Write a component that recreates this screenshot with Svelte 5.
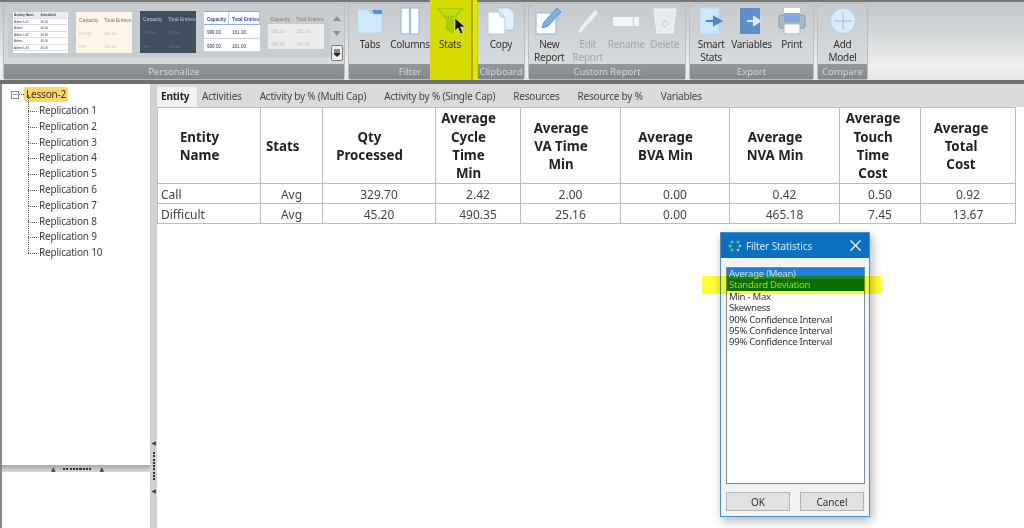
<script>
  const headers = [
    { w: 103, lines: ['Entity', 'Name'] },
    { w: 62, lines: ['Stats'] },
    { w: 113, lines: ['Qty', 'Processed'] },
    { w: 85, lines: ['Average', 'Cycle', 'Time', 'Min'] },
    { w: 100, lines: ['Average', 'VA Time', 'Min'] },
    { w: 109, lines: ['Average', 'BVA Min'] },
    { w: 110, lines: ['Average', 'NVA Min'] },
    { w: 81, lines: ['Average', 'Touch', 'Time', 'Cost'] },
    { w: 95, lines: ['Average', 'Total', 'Cost'] }
  ];
  const rows = [
    ['Call', 'Avg', '329.70', '2.42', '2.00', '0.00', '0.42', '0.50', '0.92'],
    ['Difficult', 'Avg', '45.20', '490.35', '25.16', '0.00', '465.18', '7.45', '13.67']
  ];
  const tabs = ['Activities', 'Activity by % (Multi Cap)', 'Activity by % (Single Cap)', 'Resources', 'Resource by %', 'Variables'];
  const reps = Array.from({ length: 10 }, (_, i) => `Replication ${i + 1}`);
  const stats = ['Average (Mean)', 'Standard Deviation', 'Min - Max', 'Skewness', '90% Confidence Interval', '95% Confidence Interval', '99% Confidence Interval'];
</script>

<div class="page">
  <header class="ribbon">
    <section class="group personalize">
      <div class="body gallery">
        <div class="thumbs">
          <div class="thumb t1">
            <div class="mini-head"><span>Activity Name</span><span>Scheduled</span></div>
            {#each ['Admin Lvl1', 'Admin', 'Admin Lvl2', 'Admin', 'Admin Lvl3'] as n}
              <div class="mini-row"><span>{n}</span><span>40.00</span></div>
            {/each}
          </div>
          <div class="thumb t2"><b>Capacity</b><b>Total Entries</b><i>999.00</i><i>161.00</i><i>999</i><i>161.00</i></div>
          <div class="thumb t3"><b>Capacity</b><b>Total Entries</b><i>999.00</i><i>161.00</i><i>999</i><i>161.00</i></div>
          <div class="thumb t4"><b>Capacity</b><b>Total Entries</b><i>999.00</i><i>161.00</i><i>999.00</i><i>161.00</i></div>
          <div class="thumb t5"><b>Capacity</b><b>Total Entries</b><i>999.00</i><i>161.00</i><i>999.00</i><i>161.00</i></div>
        </div>
        <div class="scroller">
          <svg class="arr" width="8" height="5" viewBox="0 0 8 5"><path d="M4 0l4 5H0z" fill="#8b9093"/></svg>
          <svg class="arr" width="8" height="5" viewBox="0 0 8 5"><path d="M4 5l4-5H0z" fill="#8b9093"/></svg>
          <span class="more"><svg width="8" height="8" viewBox="0 0 8 8"><path d="M1 1h6M1 3h6M1 4.500h6L4 7.500z" stroke="#222" fill="#222" stroke-width="1"/></svg></span>
        </div>
      </div>
      <div class="label">Personalize</div>
    </section>

    <section class="group filter">
      <div class="body tools">
        <div class="tool">
          <svg width="26" height="28" viewBox="0 0 26 28"><path d="M1 3h10l3 4h11v19H1z" fill="#cfe9fb" stroke="#b6daf2"/><path d="M15 3h10v4H17z" fill="#4e94d8"/></svg>
          <span>Tabs</span>
        </div>
        <div class="tool">
          <svg width="20" height="28" viewBox="0 0 20 28"><rect x="1" y="1" width="8.500" height="26" fill="#fff" stroke="#9cc2e6" stroke-width="1.300"/><rect x="10.500" y="1" width="8.500" height="26" fill="#fff" stroke="#9cc2e6" stroke-width="1.300"/></svg>
          <span>Columns</span>
        </div>
        <div class="tool hi">
          <svg width="28" height="28" viewBox="0 0 28 28"><path d="M0 1h28L18 13v14l-8-4V13z" fill="#a8cc00"/><path d="M3 2h22l-7 7H10z" fill="#bede10"/></svg>
          <span>Stats</span>
        </div>
      </div>
      <div class="label">Filter</div>
    </section>

    <section class="group clip">
      <div class="body tools">
        <div class="tool">
          <svg width="28" height="28" viewBox="0 0 28 28"><path d="M11 1h11l5 5v17H11z" fill="#e4f0fa" stroke="#a8cbe9"/><path d="M1 5h12l5 5v17H1z" fill="#fff" stroke="#a8cbe9"/><path d="M13 5v5h5" fill="#d5e8f7" stroke="#a8cbe9"/></svg>
          <span>Copy</span>
        </div>
      </div>
      <div class="label">Clipboard</div>
    </section>

    <section class="group custom">
      <div class="body tools">
        <div class="tool">
          <svg width="28" height="28" viewBox="0 0 28 28"><rect x="1" y="6" width="20" height="21" fill="#fff" stroke="#9cc2e6" stroke-width="1.300"/><path d="M7 21l2-6L22 1l4 4-13 14z" fill="#7fb0e2" stroke="#5c92cf"/></svg>
          <span>New<br />Report</span>
        </div>
        <div class="tool off">
          <svg width="22" height="28" viewBox="0 0 22 28"><path d="M1 27l2-6L18 3l3 3L5 24z" fill="#eef1f3"/></svg>
          <span>Edit<br />Report</span>
        </div>
        <div class="tool off">
          <svg width="26" height="28" viewBox="0 0 26 28"><rect x="0" y="10" width="20" height="9" fill="#f2f4f5"/><rect x="21" y="10" width="5" height="9" fill="#f2f4f5"/></svg>
          <span>Rename</span>
        </div>
        <div class="tool off">
          <svg width="24" height="28" viewBox="0 0 24 28"><path d="M1 2h22l-3 24H4z" fill="#e8ebed" stroke="#f4f5f6"/><path d="M9 17l3-4 3 4-3 3z" fill="none" stroke="#c5cacd"/></svg>
          <span>Delete</span>
        </div>
      </div>
      <div class="label">Custom Report</div>
    </section>

    <section class="group export">
      <div class="body tools">
        <div class="tool">
          <svg width="24" height="28" viewBox="0 0 24 28"><rect x="1" y="1" width="19" height="26" fill="#cfe6f9" stroke="#b4d5ee"/><path d="M7 14h10M15 10l7 4-7 4z" stroke="#4a86c2" stroke-width="2" fill="#4a86c2"/></svg>
          <span>Smart<br />Stats</span>
        </div>
        <div class="tool">
          <svg width="24" height="28" viewBox="0 0 24 28"><rect x="1" y="1" width="20" height="26" fill="#5f8ec6"/><path d="M8 14h9M15 10l6 4-6 4z" stroke="#dcecf9" stroke-width="2" fill="#dcecf9"/></svg>
          <span>Variables</span>
        </div>
        <div class="tool">
          <svg width="28" height="28" viewBox="0 0 28 28"><rect x="6" y="1" width="16" height="8" fill="#fff"/><rect x="1" y="8" width="26" height="13" rx="2" fill="#aab6c2" stroke="#8d99a6"/><rect x="6" y="6" width="16" height="9" fill="#7fa9e0"/><rect x="6" y="17" width="16" height="10" fill="#f7f8f9" stroke="#aab6c2"/></svg>
          <span>Print</span>
        </div>
      </div>
      <div class="label">Export</div>
    </section>

    <section class="group compare">
      <div class="body tools">
        <div class="tool">
          <svg width="28" height="28" viewBox="0 0 28 28"><circle cx="14" cy="14" r="12.500" fill="#dcedfa" stroke="#b5d6f0" stroke-width="1.500"/><path d="M14 5v18M5 14h18" stroke="#a6cdee" stroke-width="1.300"/></svg>
          <span>Add<br />Model</span>
        </div>
      </div>
      <div class="label">Compare</div>
    </section>
  </header>

  <main class="main">
    <aside class="side">
      <div class="tree">
        <div class="root">
          <span class="minus"></span><span class="dots"></span><span class="lesson">Lesson-2</span>
        </div>
        <ul>
          {#each reps as r}
            <li>{r}</li>
          {/each}
        </ul>
      </div>
      <div class="hsplit">
        <span class="tri">▲</span><span class="grip"></span><span class="tri">▲</span>
      </div>
      <div class="lower"></div>
    </aside>

    <div class="vsplit">
      <span class="tri">◀</span><span class="grip"></span><span class="tri">◀</span>
    </div>

    <section class="content">
      <nav class="tabs">
        <span class="tab on">Entity</span>
        {#each tabs as t}
          <span class="tab">{t}</span>
        {/each}
      </nav>
      <table>
        <colgroup>
          {#each headers as h}
            <col style:width="{h.w}px" />
          {/each}
        </colgroup>
        <thead>
          <tr>
            {#each headers as h, i}
              <th class:lefty={i === 1} class:tight={i > 6}>
                {#each h.lines as l}{l}<br />{/each}
              </th>
            {/each}
          </tr>
        </thead>
        <tbody>
          {#each rows as row}
            <tr>
              {#each row as c, i}
                <td class:first={i === 0}>{c}</td>
              {/each}
            </tr>
          {/each}
        </tbody>
      </table>
    </section>
  </main>

  <div class="hl hl-stats"></div>

  <svg class="cursor" width="12" height="18" viewBox="0 0 12 18"><path d="M1 1v13l3-3 2.500 6 2.500-1-2.500-6H11z" fill="#111" stroke="#eee" stroke-width=".6"/></svg>

  <div class="dialog">
    <div class="title">
      <svg width="14" height="14" viewBox="0 0 14 14"><g fill="#6fbf73"><circle cx="4" cy="3" r="1.500"/><circle cx="10" cy="3" r="1.500"/><circle cx="2" cy="7" r="1.500"/><circle cx="4" cy="11" r="1.500"/></g><g fill="#9ad0e8"><circle cx="12" cy="7" r="1.300"/><circle cx="10" cy="11" r="1.300"/></g></svg>
      <span class="ttext">Filter Statistics</span>
      <svg class="x" width="11" height="11" viewBox="0 0 11 11"><path d="M.5.5l10 10M10.500.5l-10 10" stroke="#fff" stroke-width="1.200"/></svg>
    </div>
    <div class="dbody">
      <div class="list">
        {#each stats as s, i}
          <div class="item" class:blue={i === 0} class:green={i === 1}>{s}</div>
        {/each}
      </div>
      <div class="btns">
        <button>OK</button>
        <button>Cancel</button>
      </div>
    </div>
  </div>

  <div class="hl hl-line"></div>
</div>

<style>
  :global(body) { margin: 0; background: #fff; }
  .page {
    position: relative;
    width: 1024px;
    height: 528px;
    overflow: hidden;
    font-family: "Noto Sans", "Liberation Sans", sans-serif;
    color: #333;
    background: #fff;
  }
  .ribbon {
    height: 84px;
    box-sizing: border-box;
    display: flex;
    gap: 3px;
    padding: 1px 0 0 3px;
    background: linear-gradient(#c4c8cb, #d3d6d8 40%, #eeeff0 80%, #e6e7e8);
    border-top: 2px solid #777;
    border-bottom: 4px solid #6f7072;
  }
  .group {
    display: flex;
    flex-direction: column;
    box-sizing: border-box;
    flex: none;
    height: 77px;
    border: 1px solid #b9bec1;
    border-radius: 3px;
    background: linear-gradient(#c7cbce, #dbdedf);
  }
  .personalize { width: 342px; }
  .filter { width: 124px; }
  .clip { width: 48px; margin-left: 2px; }
  .custom { width: 158px; }
  .export { width: 125px; }
  .compare { width: 51px; }
  .body { flex: 1; min-height: 0; }
  .label {
    height: 15px;
    flex: none;
    background: linear-gradient(#94989b, #84888b);
    color: #d4d6d7;
    font-size: 9.500px;
    line-height: 15px;
    text-align: center;
    white-space: nowrap;
    overflow: hidden;
  }
  .gallery { display: flex; align-items: flex-start; padding: 4px 0 0 4px; }
  .thumbs {
    display: flex;
    align-items: flex-start;
    gap: 8px;
    width: 322px;
    height: 50px;
    box-sizing: border-box;
    padding: 4px 0 0 5px;
    background: #c5cdd0;
    border-radius: 2px;
    flex: none;
  }
  .thumb {
    flex: none;
    width: 56px;
    height: 41px;
    box-sizing: border-box;
    font-size: 4px;
    overflow: hidden;
    font-family: "Liberation Sans", sans-serif;
  }
  .t1 { width: 55px; background: #fff; color: #444; font-size: 3px; padding: 0 1px; }
  .mini-head, .mini-row { display: grid; grid-template-columns: 1fr 1fr; height: 6.500px; border-bottom: 1px solid #dde; line-height: 6px; box-sizing: border-box; }
  .mini-head { background: #e8edf0; font-weight: bold; }
  .t2, .t3, .t4, .t5 { display: grid; grid-template-columns: 25px 31px; grid-auto-rows: 1fr; font-size: 5px; }
  .thumb b, .thumb i { font-style: normal; font-weight: normal; padding: 5px 0 0 3px; white-space: nowrap; }
  .t2 { background: #fdf6e6; color: #776; }
  .t2 i { color: #cbc5b0; font-size: 4px; }
  .t3 { background: #3f4f60; color: #bcc6cf; height: 42px; margin-top: -1px; }
  .t3 i { color: #687888; font-size: 4px; }
  .t4 { background: #fff; color: #334; border-top: 1px solid #8aa9ec; margin-top: -1px; font-size: 4.600px; }
  .t4 b { color: #2851a8; border-bottom: 1px solid #8aa9ec; border-right: 1px solid #b8c8e8; font-weight: bold; }
  .t4 i { border-bottom: 1px solid #c8d4ec; }
  .t5 { background: #ebecee; color: #8a8d90; height: 37px; font-size: 4.600px; }
  .t5 b { background: #c8cacc; font-weight: bold; }
  .t5 i { color: #c0c2c4; }
  .scroller { flex: none; width: 12px; margin-left: 1px; display: flex; flex-direction: column; align-items: center; padding-top: 8px; }
  .arr { margin-bottom: 10px; }
  .more { width: 12px; height: 16px; background: #f0f1f2; border: 1px solid #777; border-radius: 2px; box-sizing: border-box; display: flex; align-items: center; justify-content: center; margin-top: -1px; }
  .tools { display: flex; padding: 3px 1px 0; }
  .tool {
    flex: 1 1 0;
    min-width: 0;
    display: flex;
    flex-direction: column;
    align-items: center;
    font-size: 10px;
    letter-spacing: -.25px;
    line-height: 13px;
    color: #333;
    text-align: center;
    white-space: nowrap;
  }
  .tool svg { flex: none; margin-bottom: 3px; }
  .hi { position: relative; z-index: 3; }
  .off { color: #a4a8ab; }
  .main { display: flex; height: 444px; background: #86888a; }
  .side {
    width: 148px;
    margin-left: 2px;
    display: flex;
    flex-direction: column;
    flex: none;
    background: #fff;
  }
  .tree { height: 381px; box-sizing: border-box; padding: 2px 0 0 9px; font-size: 10px; letter-spacing: -.2px; color: #3a3a48; }
  .root { display: flex; align-items: center; height: 17px; }
  .minus { width: 8px; height: 8px; border: 1px solid #888; box-sizing: border-box; background: linear-gradient(#888,#888) center/4px 1px no-repeat; }
  .dots { width: 5px; border-top: 1px dotted #555; }
  .lesson { background: #fbd765; border-radius: 2px; padding: 1px 2px; color: #333; line-height: 13px; }
  ul { list-style: none; margin: 0; padding: 0 0 0 17px; }
  li { position: relative; height: 15.800px; line-height: 15.800px; padding-left: 11px; white-space: nowrap; }
  li::before { content: ""; position: absolute; left: 0; top: -8px; bottom: 8px; border-left: 1px dotted #555; }
  li::after { content: ""; position: absolute; left: 0; top: 8px; width: 9px; border-top: 1px dotted #555; }
  .hsplit {
    height: 7px;
    background: linear-gradient(#a5a7a8, #d8dadb);
    display: flex;
    align-items: center;
    justify-content: center;
    gap: 7px;
    padding-left: 3px;
    flex: none;
  }
  .lower { flex: 1; }
  .tri { font-size: 6px; line-height: 6px; color: #444; font-family: "DejaVu Sans", sans-serif; }
  .grip { width: 30px; height: 2px; background: repeating-linear-gradient(90deg, #333 0 2px, transparent 2px 3.300px); }
  .vsplit {
    width: 7px;
    flex: none;
    background: #cfd1d3;
    display: flex;
    flex-direction: column;
    align-items: center;
    justify-content: flex-end;
    gap: 6px;
    padding-bottom: 34px;
    box-sizing: border-box;
  }
  .vsplit .grip { width: 2px; height: 30px; background: repeating-linear-gradient(180deg, #333 0 2px, transparent 2px 3.300px); }
  .content { flex: 1; min-width: 0; background: #fff; }
  .tabs {
    height: 23px;
    box-sizing: border-box;
    background: #d8dadc;
    display: flex;
    align-items: flex-end;
    gap: 18px;
    font-size: 10px;
    letter-spacing: -.2px;
    color: #444;
  }
  .tab { height: 20px; line-height: 18px; white-space: nowrap; }
  .tab.on { background: #f1f2f3; font-weight: bold; color: #222; width: 40px; box-sizing: border-box; padding-left: 4px; margin-right: -13px; }
  table {
    border-collapse: collapse;
    table-layout: fixed;
    width: 858px;
    color: #444;
  }
  th, td { border: 1px solid #bdbdbd; padding: 0; }
  th {
    height: 74px;
    font-size: 13.300px;
    line-height: 18.300px;
    font-weight: bold;
    color: #222;
    text-align: center;
    padding-right: 19px;
    padding-top: 1px;
  }
  th.tight { padding-right: 14px; }
  th.lefty { text-align: left; padding: 1px 0 0 5px; }
  td { height: 20px; font-size: 12px; text-align: center; padding-top: 1px; box-sizing: border-box; }
  td.first { text-align: left; padding-left: 3px; }
  .hl { position: absolute; }
  .hl-stats {
    left: 430px;
    top: 0;
    width: 47px;
    height: 80px;
    background: linear-gradient(90deg, #d6dc00 0 41px, #a9ad0c 41px 43px, #e2e600 43px);
    z-index: 2;
  }
  .hl-line { left: 702px; top: 276px; width: 179px; height: 18px; background: #ffff30; mix-blend-mode: multiply; z-index: 5; }
  .cursor { position: absolute; left: 454px; top: 17px; z-index: 4; }
  .dialog {
    position: absolute;
    left: 720px;
    top: 232px;
    width: 150px;
    height: 285px;
    box-sizing: border-box;
    border: 1px solid #4a8fc7;
    background: #f0f4f6;
    box-shadow: 2px 4px 10px rgba(0,0,0,.3);
    display: flex;
    flex-direction: column;
  }
  .title {
    height: 25px;
    flex: none;
    background: #0a70bf;
    color: #d8e9f6;
    font-size: 10px;
    display: flex;
    align-items: center;
    padding: 0 8px 0 7px;
    gap: 4px;
  }
  .ttext { flex: 1; letter-spacing: -.1px; }
  .dbody { flex: 1; display: flex; flex-direction: column; padding: 9px 4px 6px 5px; }
  .list {
    height: 217px;
    flex: none;
    box-sizing: border-box;
    border: 1px solid #7f8a94;
    background: #fff;
    font-size: 9.600px;
    letter-spacing: -.28px;
    line-height: 11.400px;
    color: #333;
  }
  .item { white-space: nowrap; padding-left: 2px; }
  .blue { background: #1e7fd8; color: #c4e2f8; }
  .green { background: #0a6e08; color: #a8d41c; }
  .btns { display: flex; justify-content: space-between; margin-top: 8px; padding: 0 1px 0 0; }
  button {
    width: 64px;
    height: 19px;
    padding: 0;
    font: 10px "Noto Sans", "Liberation Sans", sans-serif;
    color: #333;
    background: #e1e1e1;
    border: 1px solid #b4b4b4;
  }
</style>
